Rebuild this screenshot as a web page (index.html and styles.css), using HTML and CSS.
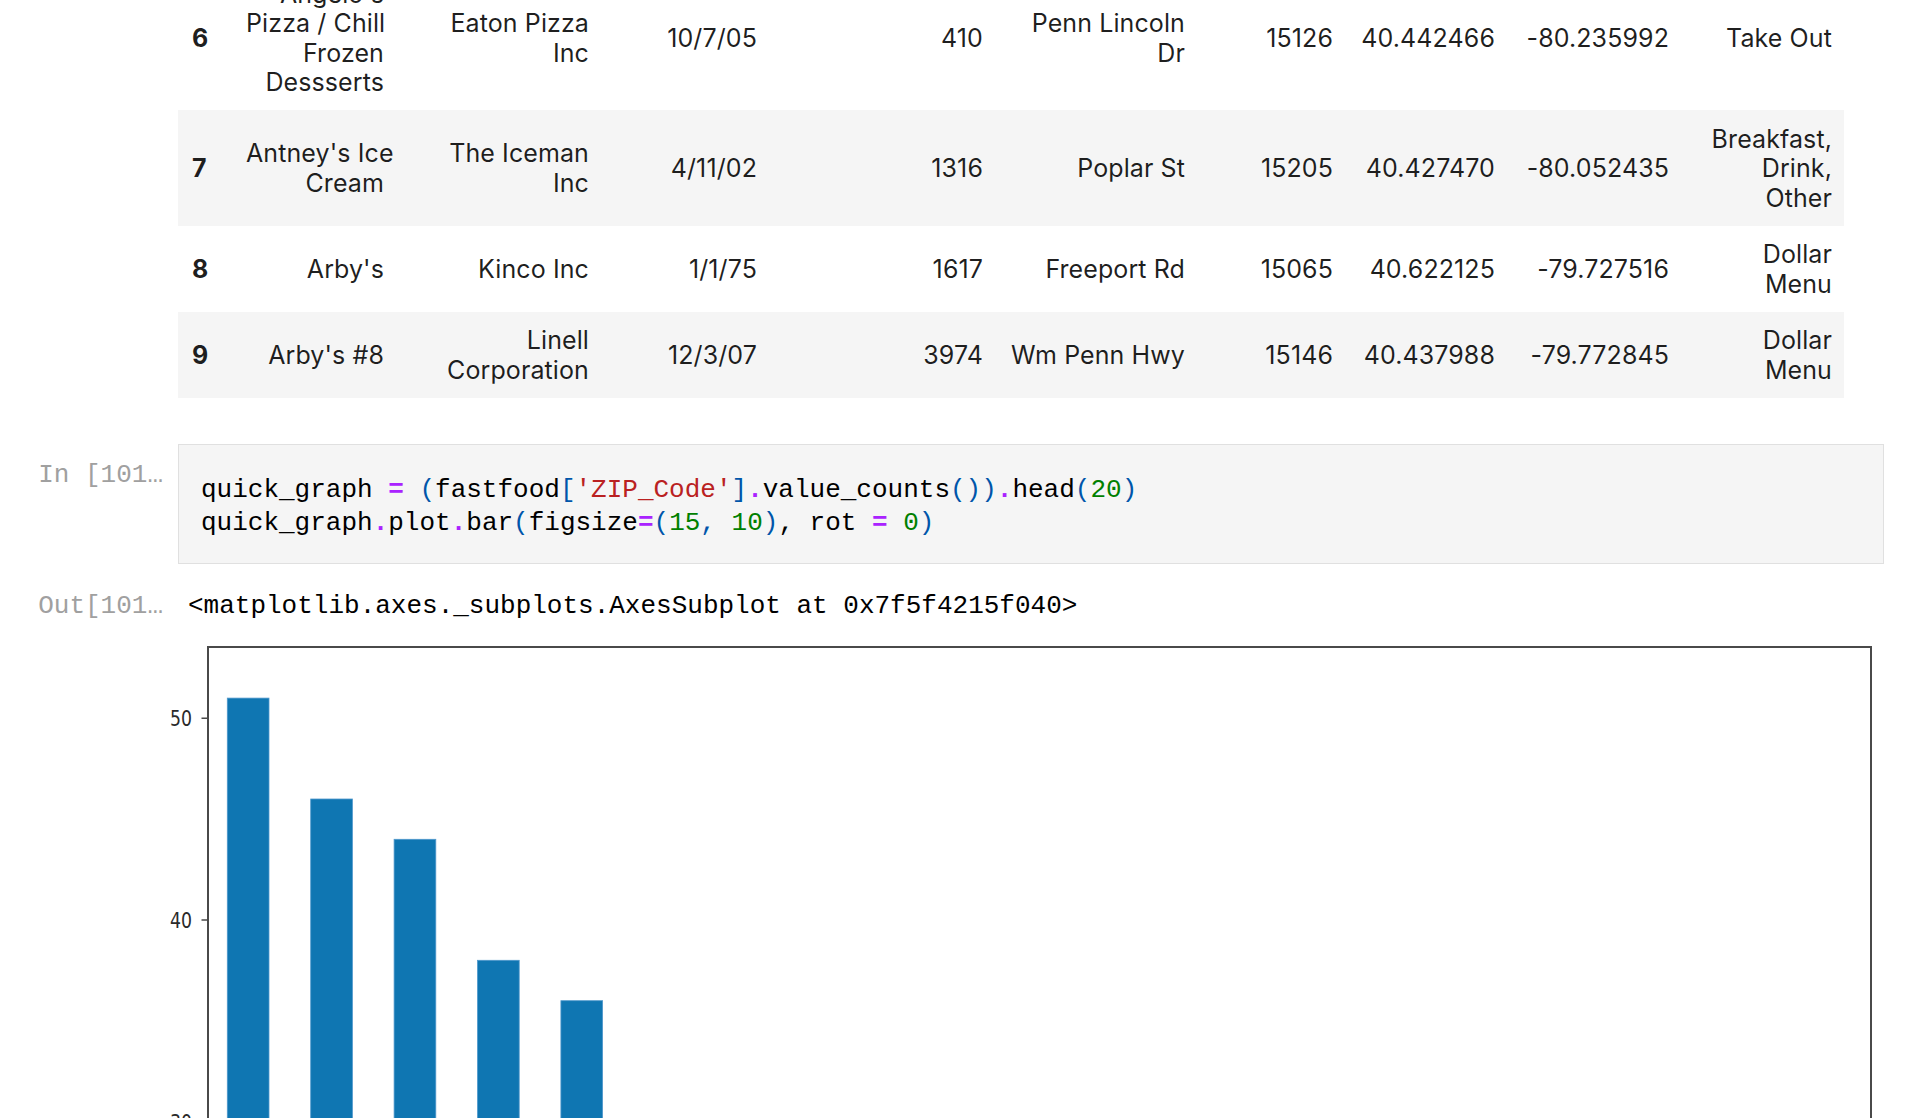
FILE: index.html
```html
<!DOCTYPE html>
<html lang="en">
<head>
<meta charset="utf-8">
<title>fastfood notebook</title>
<link rel="stylesheet" href="styles.css">
</head>
<body>
<div class="notebook">
  <div class="row">
    <div class="prompt"></div>
    <div class="output">
      <table class="df">
        <colgroup>
          <col class="w-idx"><col class="w-name"><col class="w-owner"><col class="w-date"><col class="w-num"><col class="w-street"><col class="w-zip"><col class="w-lat"><col class="w-lon"><col class="w-type">
        </colgroup>
        <tbody>
          <tr>
            <th>6</th>
            <td>Angelo's<br>Pizza / Chill<br>Frozen<br>Dessserts</td>
            <td>Eaton Pizza<br>Inc</td>
            <td>10/7/05</td>
            <td>410</td>
            <td>Penn Lincoln<br>Dr</td>
            <td>15126</td>
            <td>40.442466</td>
            <td>-80.235992</td>
            <td>Take Out</td>
          </tr>
          <tr class="alt">
            <th>7</th>
            <td>Antney's Ice<br>Cream</td>
            <td>The Iceman<br>Inc</td>
            <td>4/11/02</td>
            <td>1316</td>
            <td>Poplar St</td>
            <td>15205</td>
            <td>40.427470</td>
            <td>-80.052435</td>
            <td>Breakfast,<br>Drink,<br>Other</td>
          </tr>
          <tr>
            <th>8</th>
            <td>Arby's</td>
            <td>Kinco Inc</td>
            <td>1/1/75</td>
            <td>1617</td>
            <td>Freeport Rd</td>
            <td>15065</td>
            <td>40.622125</td>
            <td>-79.727516</td>
            <td>Dollar<br>Menu</td>
          </tr>
          <tr class="alt">
            <th>9</th>
            <td>Arby's #8</td>
            <td>Linell<br>Corporation</td>
            <td>12/3/07</td>
            <td>3974</td>
            <td>Wm Penn Hwy</td>
            <td>15146</td>
            <td>40.437988</td>
            <td>-79.772845</td>
            <td>Dollar<br>Menu</td>
          </tr>
        </tbody>
      </table>
    </div>
  </div>

  <div class="row code-row">
    <div class="prompt in-prompt">In [101…</div>
    <div class="editor">
<pre class="code">quick_graph <span class="o">=</span> <span class="p">(</span>fastfood<span class="p">[</span><span class="s">'ZIP_Code'</span><span class="p">]</span><span class="o">.</span>value_counts<span class="p">())</span><span class="o">.</span>head<span class="p">(</span><span class="n">20</span><span class="p">)</span>
quick_graph<span class="o">.</span>plot<span class="o">.</span>bar<span class="p">(</span>figsize<span class="o">=</span><span class="p">(</span><span class="n">15</span><span class="p">,</span> <span class="n">10</span><span class="p">)</span>, rot <span class="o">=</span> <span class="n">0</span><span class="p">)</span></pre>
    </div>
  </div>

  <div class="row out-row">
    <div class="prompt">Out[101…</div>
    <pre class="out-text">&lt;matplotlib.axes._subplots.AxesSubplot at 0x7f5f4215f040&gt;</pre>
  </div>

  <div class="fig-row">
    <svg class="figure" width="1740" height="500" viewBox="0 0 1740 500">
      <g class="bars">
        <rect x="77.3" y="69.1" width="41.7" height="431"/>
        <rect x="160.7" y="170" width="41.7" height="330"/>
        <rect x="244.1" y="210.3" width="41.7" height="290"/>
        <rect x="327.5" y="331.3" width="41.7" height="169"/>
        <rect x="410.9" y="371.7" width="41.7" height="129"/>
      </g>
      <path class="spine" d="M58 500 V18 H1721 V500"/>
      <path class="tick" d="M51.5 89.3 H58 M51.5 291 H58 M51.5 493 H58"/>
      <text class="ylabel" x="42" y="97" text-anchor="end" textLength="22" lengthAdjust="spacingAndGlyphs">50</text>
      <text class="ylabel" x="42" y="298.7" text-anchor="end" textLength="22" lengthAdjust="spacingAndGlyphs">40</text>
      <text class="ylabel" x="42" y="500.7" text-anchor="end" textLength="22" lengthAdjust="spacingAndGlyphs">30</text>
    </svg>
  </div>
</div>
</body>
</html>
```

FILE: styles.css
```css
* {
  box-sizing: border-box;
}

html, body {
  margin: 0;
  padding: 0;
  background: #ffffff;
  overflow: hidden;
}

.notebook {
  margin-top: -35px;
  padding-right: 22px;
}

.row {
  display: flex;
  align-items: flex-start;
}

.prompt {
  flex: 0 0 178px;
  width: 178px;
  padding-right: 15px;
  text-align: right;
  font-family: "Liberation Mono", "DejaVu Sans Mono", monospace;
  font-size: 26px;
  line-height: 33px;
  color: #a0a0a0;
  white-space: nowrap;
  overflow: hidden;
}

.output {
  flex: 1;
}

.df {
  border-collapse: collapse;
  table-layout: fixed;
  width: 1666px;
  font-family: Inter, "Noto Sans", sans-serif;
  font-size: 25px;
  line-height: 29.5px;
  letter-spacing: 0.1px;
  color: rgba(0, 0, 0, 0.88);
}

.w-idx { width: 56px; }
.w-name { width: 162px; }
.w-owner { width: 205px; }
.w-date { width: 168px; }
.w-num { width: 226px; }
.w-street { width: 202px; }
.w-zip { width: 148px; }
.w-lat { width: 162px; }
.w-lon { width: 174px; }
.w-type { width: 163px; }

.df td,
.df th {
  padding: 14.5px 12px 12.5px;
  text-align: right;
  vertical-align: middle;
  white-space: nowrap;
  border: none;
}

.df th {
  font-weight: 700;
  text-align: left;
  padding-left: 14px;
}

.df tr.alt {
  background: #f5f5f5;
}

.code-row {
  margin-top: 46.5px;
}

.in-prompt {
  padding-top: 14.5px;
}

.editor {
  flex: 1;
  border: 1px solid #e0e0e0;
  background: #f5f5f5;
  padding: 29px 22px 23px;
}

.code {
  margin: 0;
  font-family: "Liberation Mono", "DejaVu Sans Mono", monospace;
  font-size: 26px;
  line-height: 33px;
  color: #000000;
}

.code .o {
  color: #aa22ff;
  font-weight: 700;
}

.code .p {
  color: #0055aa;
}

.code .s {
  color: #ba2121;
}

.code .n {
  color: #008000;
}

.out-row {
  margin-top: 26px;
}

.out-text {
  margin: 0;
  padding-left: 10px;
  font-family: "Liberation Mono", "DejaVu Sans Mono", monospace;
  font-size: 26px;
  line-height: 33px;
  color: #000000;
}

.fig-row {
  margin-top: 6px;
  padding-left: 150px;
}

.figure {
  display: block;
  overflow: visible;
}

.bars rect {
  fill: #0f76b2;
  stroke: #4f98cc;
  stroke-width: 0.8;
}

.spine {
  fill: none;
  stroke: #4a4a4a;
  stroke-width: 2;
}

.tick {
  fill: none;
  stroke: #4a4a4a;
  stroke-width: 1.5;
}

.ylabel {
  font-family: "DejaVu Sans", sans-serif;
  font-size: 21px;
  fill: #2a2a2a;
}
```
